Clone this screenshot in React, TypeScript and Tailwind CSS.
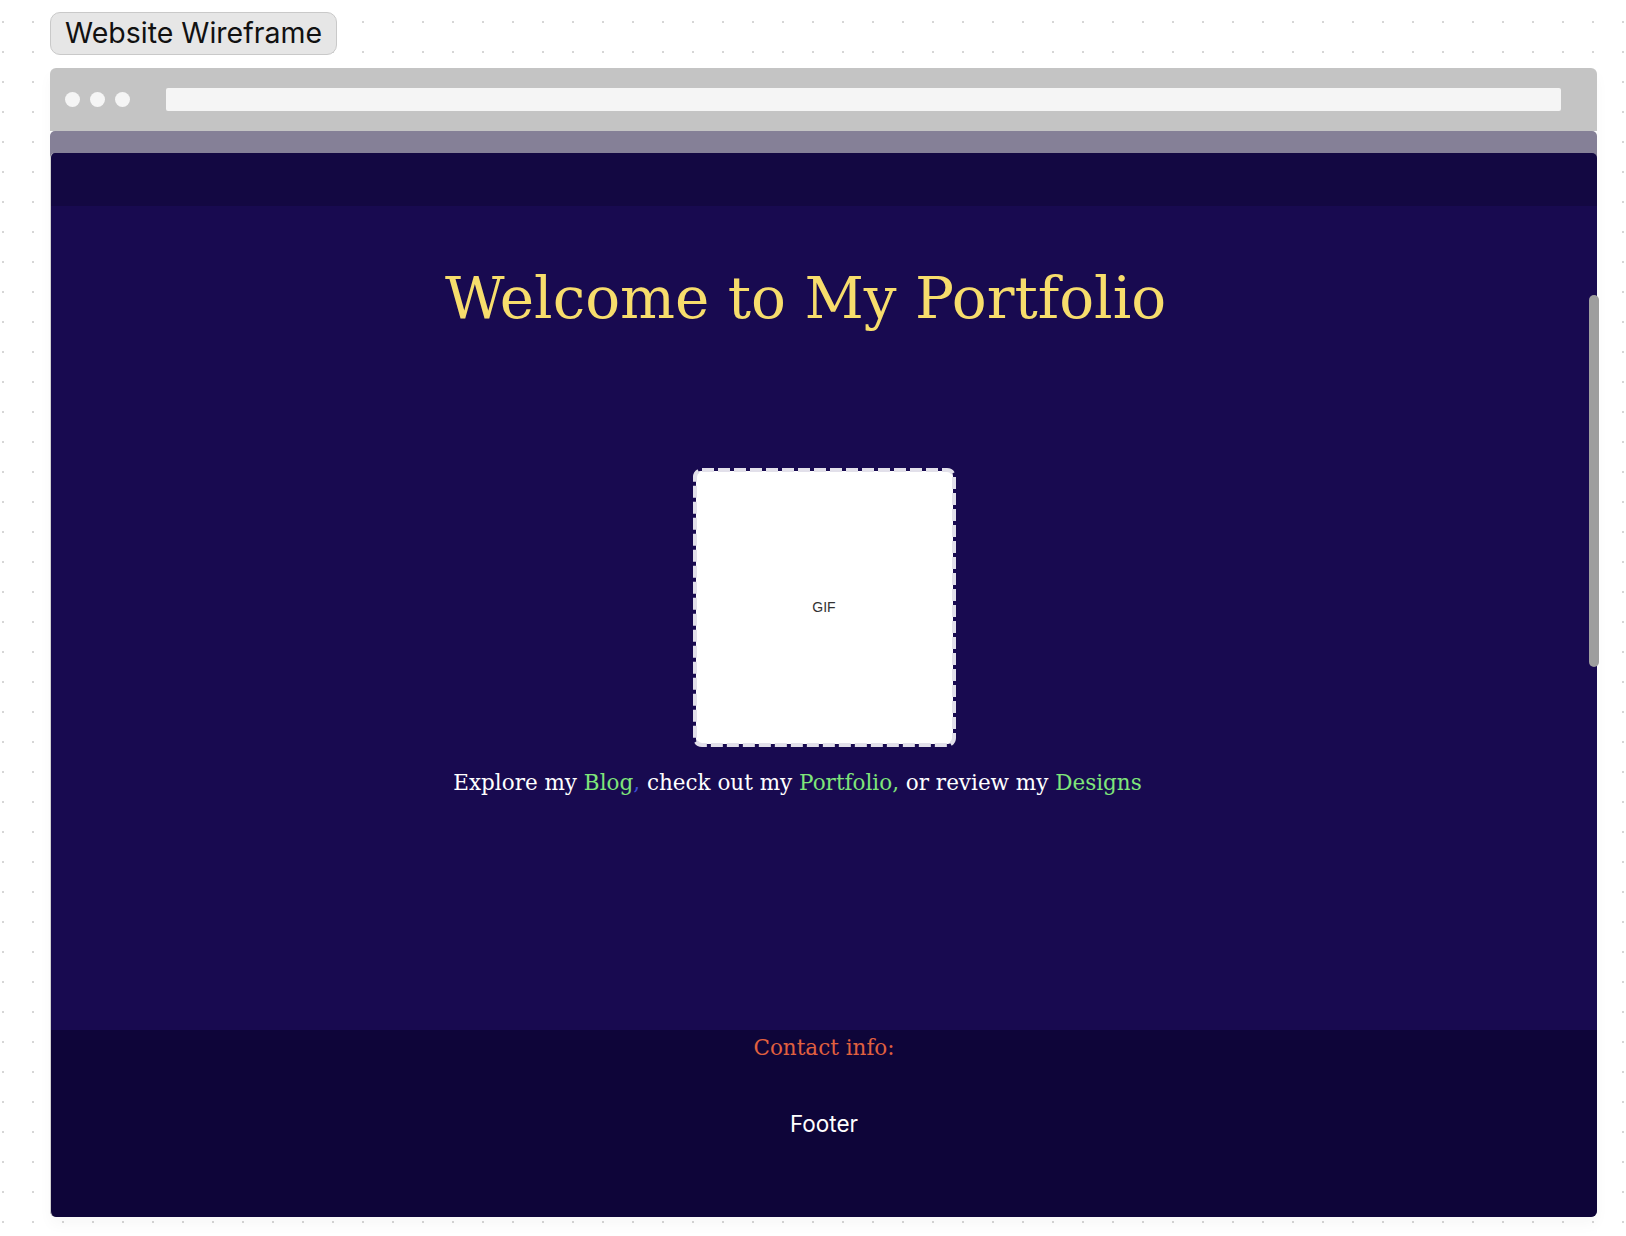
const serif = "font-['DejaVu_Serif','Liberation_Serif',serif]";

function BrowserDots() {
  return (
    <div className="flex items-center gap-[10px]">
      <span className="w-[15px] h-[15px] rounded-full bg-[#f5f5f5]" />
      <span className="w-[15px] h-[15px] rounded-full bg-[#f5f5f5]" />
      <span className="w-[15px] h-[15px] rounded-full bg-[#f5f5f5]" />
    </div>
  );
}

function GifPlaceholder() {
  return (
    <div className="relative mt-[141px] w-[263px] h-[279px] flex items-center justify-center">
      <div className="absolute inset-[3px] rounded-[5px] bg-white" />
      {/* dashed outline, long dashes like the wireframe tool draws */}
      <svg className="absolute inset-0" width="263" height="279" viewBox="0 0 263 279" fill="none">
        <rect
          x="2"
          y="2"
          width="259"
          height="275"
          rx="7"
          stroke="#e2e0ea"
          strokeWidth="4"
          strokeDasharray="12 4"
        />
      </svg>
      <span className="relative font-['Liberation_Sans',Arial,sans-serif] text-[14px] text-[#333]">GIF</span>
    </div>
  );
}

export default function App() {
  return (
    <div className="relative min-h-[1236px] w-full bg-white bg-[radial-gradient(circle,#d6d6d6_1px,transparent_1.5px)] bg-[size:30px_30px] bg-[position:-12px_7px] pl-[50px] pt-[12px] font-['Inter','Liberation_Sans',sans-serif]">
      <button
        type="button"
        className="h-[43px] px-[14px] rounded-[10px] border border-[#c9c9c9] bg-[#e6e6e6] text-[28.5px] leading-none text-[#111]"
      >
        Website Wireframe
      </button>

      <div className="relative mt-[13px] w-[1547px] shadow-[0_8px_14px_rgba(0,0,0,0.03)] rounded-b-[6px]">
        {/* browser chrome */}
        <div className="h-[63px] rounded-t-[6px] bg-[#c4c4c4] flex items-center pl-[15px] pr-[36px]">
          <BrowserDots />
          <div className="ml-[36px] flex-1 h-[23px] rounded-[2px] bg-[#f5f5f5]" />
        </div>

        <div className="bg-[#858097] pt-[22px] rounded-t-[5px] rounded-b-[6px]">
          <div className="rounded-t-[5px] rounded-b-[6px] overflow-hidden border-l border-[#d0d0d0]">
            <div className="h-[53px] bg-[#130842]" />

            <main className="h-[824px] bg-[#180a50] flex flex-col items-center">
              <h1 className={`${serif} mt-[63px] pr-[37px] text-[58px] leading-none text-[#f7dd6c]`}>
                Welcome to My Portfolio
              </h1>

              <GifPlaceholder />

              <p className={`${serif} mt-[22px] pr-[53px] text-[21.5px] leading-[28px] text-white`}>
                Explore my <span className="text-[#7fe57a]">Blog</span>
                <span className="text-[#3b4bd6]">,</span> check out my{" "}
                <span className="text-[#7fe57a]">Portfolio,</span> or review my{" "}
                <span className="text-[#7fe57a]">Designs</span>
              </p>
            </main>

            <footer className="h-[187px] bg-[#0e0539] flex flex-col items-center pt-[4px]">
              <div className={`${serif} text-[21.5px] leading-[28px] text-[#e0603f]`}>Contact info:</div>
              <div className="mt-[47px] text-[22.5px] leading-[30px] text-white">Footer</div>
            </footer>
          </div>
        </div>

        {/* scrollbar */}
        <div className="absolute right-[-2px] top-[227px] w-[10px] h-[372px] rounded-full bg-[#9e9e9e]" />
      </div>
    </div>
  );
}
